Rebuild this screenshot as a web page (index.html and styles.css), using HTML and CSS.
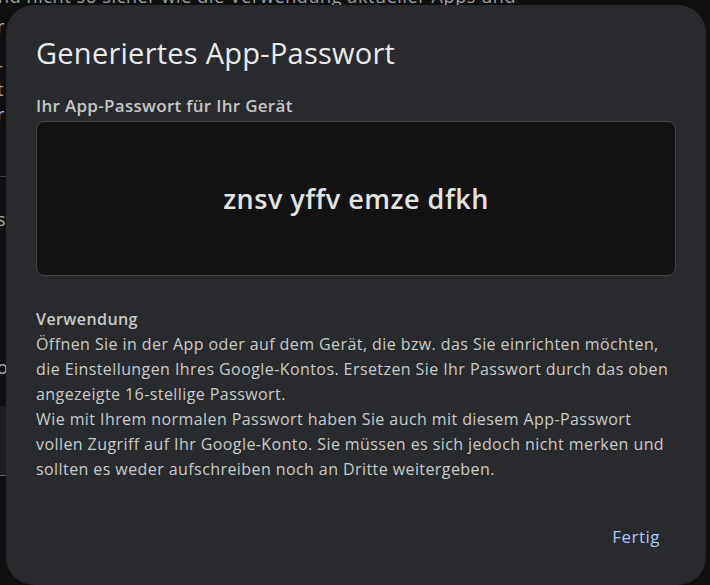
FILE: index.html
```html
<!DOCTYPE html>
<html lang="de">
<head>
<meta charset="utf-8">
<link rel="stylesheet" href="styles.css">
</head>
<body>
<div class="page">
  <p class="bg-top">nd nicht so sicher wie die Verwendung aktueller Apps und</p>
  <span class="bg-ch c1">r</span>
  <span class="bg-ch c2 orange">-</span>
  <span class="bg-ch c3">t</span>
  <span class="bg-ch c4 blue">r</span>
  <div class="bg-line l1"></div>
  <span class="bg-ch c5">s</span>
  <span class="bg-ch c6">o</span>
  <div class="bg-band"></div>
</div>
<div class="dialog">
  <h1 class="title">Generiertes App-Passwort</h1>
  <div class="label">Ihr App-Passwort für Ihr Gerät</div>
  <div class="pw-box"><span class="pw">znsv yffv emze dfkh</span></div>
  <div class="usage">
    <div class="usage-head">Verwendung</div>
    <p>Öffnen Sie in der App oder auf dem Gerät, die bzw. das Sie einrichten möchten, die Einstellungen Ihres Google-Kontos. Ersetzen Sie Ihr Passwort durch das oben angezeigte 16-stellige Passwort.<br>Wie mit Ihrem normalen Passwort haben Sie auch mit diesem App-Passwort vollen Zugriff auf Ihr Google-Konto. Sie müssen es sich jedoch nicht merken und sollten es weder aufschreiben noch an Dritte weitergeben.</p>
  </div>
  <div class="actions"><button class="btn">Fertig</button></div>
</div>
</body>
</html>
```
FILE: styles.css
```css
html, body {
  margin: 0;
  padding: 0;
  width: 710px;
  height: 585px;
  overflow: hidden;
  background: #101010;
  font-family: "Open Sans", "Noto Sans", sans-serif;
}
.page {
  position: absolute;
  inset: 0;
  color: #9aa0a6;
}
.bg-top {
  position: absolute;
  margin: 0;
  left: -2px;
  top: -15px;
  font-size: 18px;
  letter-spacing: 0.6px;
  line-height: 22px;
  color: #9aa0a6;
  white-space: nowrap;
}
.bg-ch {
  position: absolute;
  left: -3px;
  font-size: 18px;
  line-height: 20px;
  color: #a8adb3;
}
.c1 { top: 16px; }
.c2 { top: 55px; }
.c3 { top: 79px; }
.c4 { top: 104px; }
.c5 { top: 209px; }
.c6 { top: 357px; }
.orange { color: #c98a4b; }
.blue { color: #8ab4f8; }
.bg-line {
  position: absolute;
  left: 0;
  width: 10px;
  height: 1px;
  background: #3c4043;
}
.l1 { top: 176px; }
.bg-band {
  position: absolute;
  left: 0;
  top: 406px;
  width: 10px;
  height: 69px;
  background: #1d1e20;
  border-bottom: 1px solid #5f6368;
}
.dialog {
  position: absolute;
  left: 6px;
  top: 5px;
  width: 700px;
  height: 580px;
  box-sizing: border-box;
  background: #292a2d;
  border-radius: 28px;
  padding: 28px 30px 0 30px;
  color: #e3e3e3;
  display: flex;
  flex-direction: column;
}
.title {
  margin: 0;
  font-size: 29px;
  font-weight: 400;
  letter-spacing: 0.25px;
  line-height: 40px;
  color: #e8eaed;
}
.label {
  margin-top: 23px;
  font-size: 17px;
  font-weight: 600;
  letter-spacing: 0.3px;
  line-height: 20px;
  color: #c4c7c5;
}
.pw-box {
  margin-top: 5px;
  height: 155px;
  box-sizing: border-box;
  background: #131313;
  border: 1px solid #444746;
  border-radius: 8px;
  display: flex;
  align-items: center;
  justify-content: center;
}
.pw {
  font-size: 27px;
  font-weight: 600;
  letter-spacing: 0.5px;
  color: #e3e3e3;
}
.usage {
  margin-top: 31px;
  font-size: 16px;
  letter-spacing: 0.42px;
  line-height: 25px;
  color: #c8cbc9;
}
.usage-head {
  font-weight: 600;
}
.usage p {
  margin: 0;
}
.actions {
  margin-top: auto;
  margin-bottom: 29px;
  display: flex;
  justify-content: flex-end;
}
.btn {
  background: none;
  border: none;
  font-family: inherit;
  font-size: 17px;
  font-weight: 500;
  letter-spacing: 0.5px;
  color: #a8c7fa;
  padding: 8px 16px;
}
```
